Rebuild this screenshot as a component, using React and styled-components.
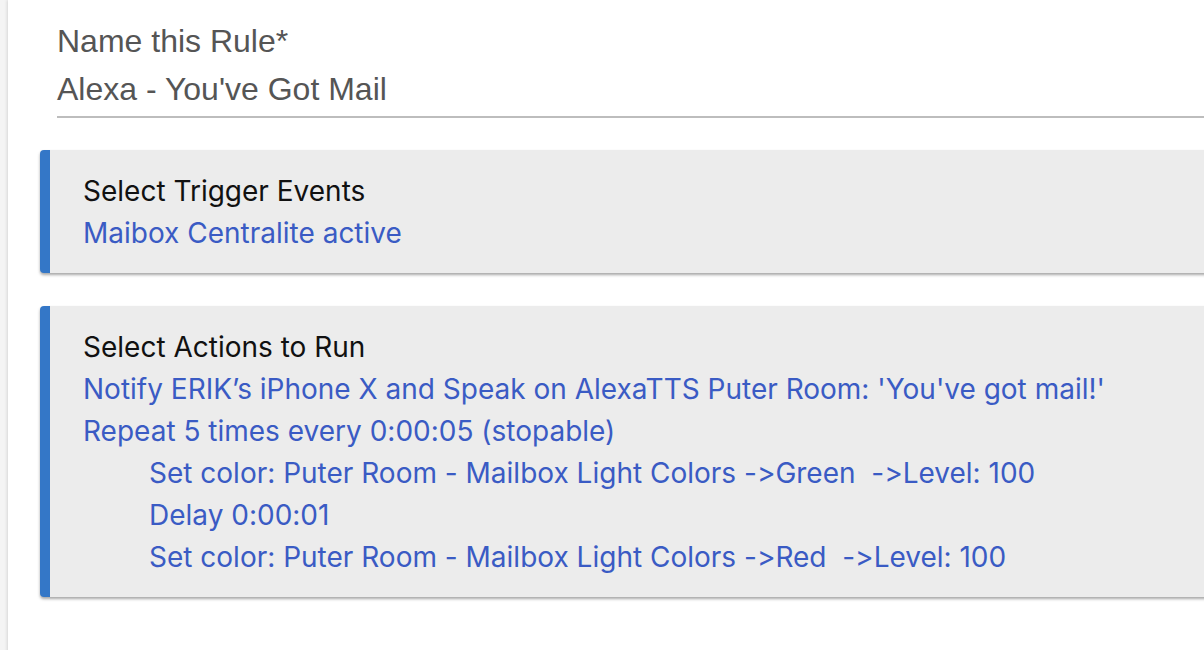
import React from 'react';
import styled, { createGlobalStyle } from 'styled-components';

const GlobalStyle = createGlobalStyle`
  html, body { margin: 0; padding: 0; background: #f4f4f4; }
  body { overflow: hidden; }
  #root { height: 650px; }
`;

const triggers = ['Maibox Centralite active'];

const actions = [
  { text: "Notify ERIK\u2019s iPhone X and Speak on AlexaTTS Puter Room: 'You've got mail!'", level: 0 },
  { text: 'Repeat 5 times every 0:00:05 (stopable)', level: 0 },
  { text: 'Set color: Puter Room - Mailbox Light Colors ->Green\u00a0 ->Level: 100', level: 1 },
  { text: 'Delay 0:00:01', level: 1 },
  { text: 'Set color: Puter Room - Mailbox Light Colors ->Red\u00a0 ->Level: 100', level: 1 },
];

export default function App() {
  return (
    <>
      <GlobalStyle />
      <Page>
        <Panel>
          <NameField>
            <FieldLabel>Name this Rule*</FieldLabel>
            <FieldValue>Alexa - You've Got Mail</FieldValue>
          </NameField>

          <SectionCard>
            <CardTitle>Select Trigger Events</CardTitle>
            {triggers.map((t) => (
              <CardLine key={t}>{t}</CardLine>
            ))}
          </SectionCard>

          <SectionCard>
            <CardTitle>Select Actions to Run</CardTitle>
            {actions.map((a) => (
              <CardLine key={a.text} level={a.level}>{a.text}</CardLine>
            ))}
          </SectionCard>
        </Panel>
      </Page>
    </>
  );
}

const Page = styled.div`height: 100%; padding-left: 8px; overflow: hidden;`;
const Panel = styled.div`
  height: 100%;
  background: #fff;
  box-shadow: -1px 0 3px rgba(0, 0, 0, 0.12);
  padding-top: 23px;
  display: flex;
  flex-direction: column;
  gap: 33px;
`;
const NameField = styled.div`
  margin-left: 49px;
  margin-bottom: -1px;
  padding-bottom: 9px;
  border-bottom: 2px solid #bdbdbd;
  font-family: "Liberation Sans", Arial, sans-serif;
  font-size: 32px;
  line-height: 36px;
  color: #555;
`;
const FieldLabel = styled.div`margin-bottom: 12px;`;
const FieldValue = styled.div``;
const SectionCard = styled.div`
  margin-left: 32px;
  margin-right: -20px;
  padding: 20px 0 19px 33px;
  background: #ececec;
  border-left: 10px solid #3477c7;
  border-radius: 4px;
  box-shadow: 0 2px 3px rgba(0, 0, 0, 0.35);
  font-family: Inter, "Noto Sans", sans-serif;
  font-size: 28px;
  line-height: 42px;
  white-space: nowrap;
  font-variant-ligatures: none;
  font-feature-settings: "calt" 0, "liga" 0;
`;
const CardTitle = styled.div`color: #111;`;
const CardLine = styled.div`
  color: #3a5bc4;
  padding-left: ${({ level }) => (level ? level * 66 : 0)}px;
`;
